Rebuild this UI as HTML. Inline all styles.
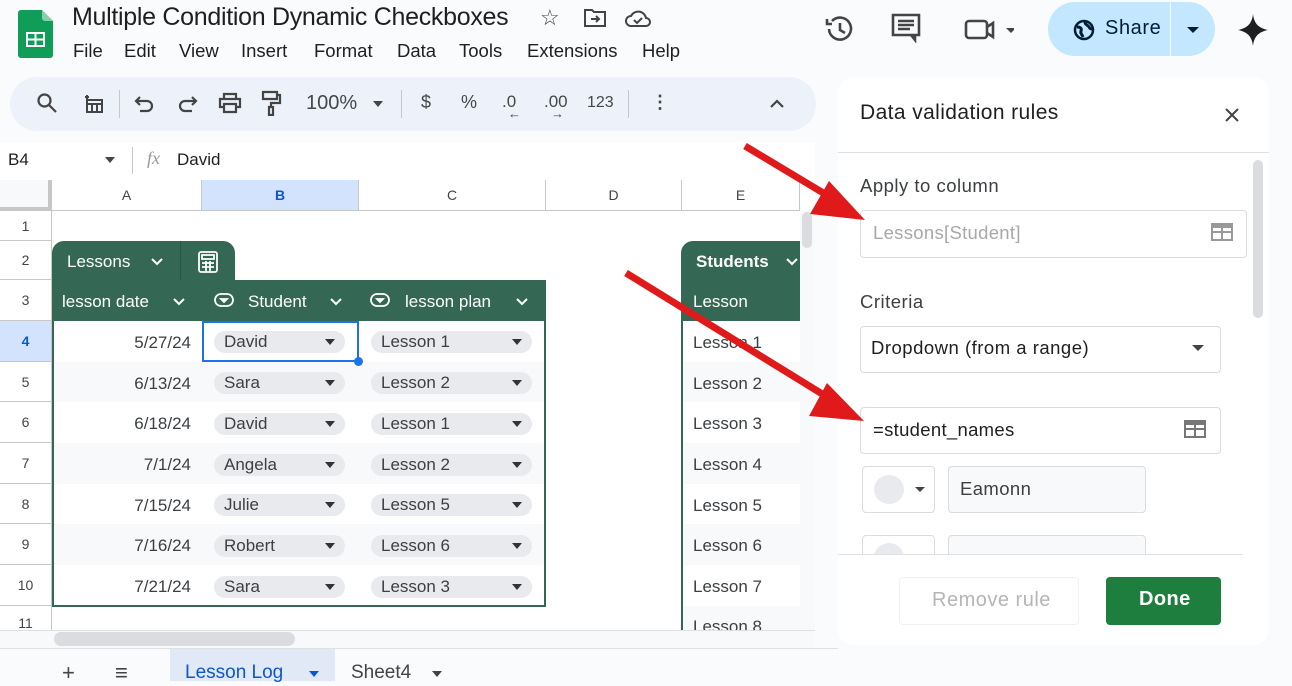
<!DOCTYPE html>
<html><head><meta charset="utf-8"><style>
*{margin:0;padding:0;box-sizing:border-box}
body{width:1292px;height:681px;overflow:hidden;background:#f9fbfd;font-family:"Liberation Sans",sans-serif;color:#1f1f1f;position:relative}
.a{position:absolute;white-space:nowrap}
.menu span{position:absolute;top:40px;font-size:18.5px;color:#1f1f1f}
.tb{position:absolute;top:92px;font-size:18px;color:#444746}
.colh{position:absolute;top:180px;height:31px;border-right:1px solid #c7c7c7;border-bottom:1px solid #c7c7c7;font-size:14px;color:#444;text-align:center;line-height:31px;background:#fff}
.rowh{position:absolute;left:0;width:52px;border-bottom:1px solid #c7c7c7;border-right:1px solid #c7c7c7;font-size:14px;color:#444;text-align:center;background:#fff}
.chip{position:absolute;height:22px;border-radius:11px;background:#e9eaee;font-size:17px;color:#3c4043;line-height:22px;padding-left:10px}
.chip:after{content:"";position:absolute;right:10px;top:8px;border-left:5px solid transparent;border-right:5px solid transparent;border-top:6px solid #333}
.date{position:absolute;left:52px;width:139px;text-align:right;font-size:17px;color:#3c4043}
.les{position:absolute;left:693px;font-size:17px;color:#3c4043}
.pin{position:absolute;border:1px solid #dadce0;border-radius:4px;background:#fff}
</style></head><body>
<svg class="a" style="left:18px;top:10px" width="35" height="48" viewBox="0 0 35 48"><path d="M3 0h21l11 11v34a3 3 0 0 1-3 3H3a3 3 0 0 1-3-3V3a3 3 0 0 1 3-3z" fill="#0f9d58"/><path d="M24 0l11 11H27a3 3 0 0 1-3-3z" fill="#87ceac"/><rect x="8" y="22" width="19" height="15" fill="#fff"/><rect x="10" y="24" width="6.5" height="4.5" fill="#0f9d58"/><rect x="18.5" y="24" width="6.5" height="4.5" fill="#0f9d58"/><rect x="10" y="30.5" width="6.5" height="4.5" fill="#0f9d58"/><rect x="18.5" y="30.5" width="6.5" height="4.5" fill="#0f9d58"/></svg>
<div class="a" style="left:72px;top:3px;font-size:25px;letter-spacing:-0.3px">Multiple Condition Dynamic Checkboxes</div>
<div class="a" style="left:540px;top:5px;font-size:22px;color:#444">☆</div>
<svg class="a" style="left:583px;top:8px" width="24" height="20" viewBox="0 0 24 20" fill="none" stroke="#444" stroke-width="2"><path d="M2 2h7l2 2h11v14H2z"/><path d="M8 11h8m-3-3l3 3-3 3"/></svg>
<svg class="a" style="left:624px;top:8px" width="28" height="20" viewBox="0 0 28 20" fill="none" stroke="#444" stroke-width="2"><path d="M7 18a5 5 0 0 1 0-10 8 8 0 0 1 15 2 4 4 0 0 1 0 8z"/><path d="M10 12l3 3 5-5"/></svg>
<div class="menu"><span style="left:73px">File</span><span style="left:124px">Edit</span><span style="left:179px">View</span><span style="left:241px">Insert</span><span style="left:314px">Format</span><span style="left:397px">Data</span><span style="left:459px">Tools</span><span style="left:527px">Extensions</span><span style="left:642px">Help</span></div>
<svg class="a" style="left:824px;top:14px" width="32" height="30" viewBox="0 0 32 30" fill="none" stroke="#444" stroke-width="2.6"><path d="M5 15a11 11 0 1 0 3-8"/><path d="M3 5v5h5"/><path d="M16 9v7l5 3"/></svg>
<svg class="a" style="left:891px;top:13px" width="30" height="30" viewBox="0 0 30 30" fill="none" stroke="#444" stroke-width="2.6"><path d="M2 2h26v20H8l-6 0z"/><path d="M7 8h16M7 12h16M7 16h12"/><path d="M24 22v5l-4-5" /></svg>
<svg class="a" style="left:964px;top:18px" width="50" height="24" viewBox="0 0 50 24" fill="none" stroke="#444" stroke-width="2.6"><rect x="2" y="3" width="21" height="17" rx="3"/><path d="M23 9l6-4v14l-6-4"/><path d="M42 10h10l-5 5z" fill="#444" stroke="none"/></svg>
<div class="a" style="left:1048px;top:2px;width:167px;height:54px;border-radius:27px;background:#c2e7ff"></div>
<div class="a" style="left:1170px;top:2px;width:1px;height:54px;background:#f9fbfd"></div>
<svg class="a" style="left:1072px;top:18px" width="24" height="24" viewBox="0 0 24 24"><circle cx="12" cy="12" r="9" fill="none" stroke="#001d35" stroke-width="2.5"/><path d="M5 9c3 0 5 1 4 4s1 3 2 6M13 4c0 3 3 3 4 5s2 2 3 2" stroke="#001d35" stroke-width="3" fill="none"/></svg>
<div class="a" style="left:1105px;top:17px;font-size:20px;color:#001d35;letter-spacing:.6px">Share</div>
<div class="a" style="left:1187px;top:27px;border-left:6px solid transparent;border-right:6px solid transparent;border-top:6px solid #001d35"></div>
<svg class="a" style="left:1238px;top:14px" width="30" height="32" viewBox="0 0 30 32"><path d="M15 0C16 9 20 14 30 16 20 18 16 23 15 32 14 23 10 18 0 16 10 14 14 9 15 0z" fill="#1f1f1f"/></svg>
<div class="a" style="left:10px;top:77px;width:806px;height:54px;border-radius:27px;background:#edf2fa"></div>
<svg class="a" style="left:36px;top:92px" width="22" height="22" viewBox="0 0 22 22" fill="none" stroke="#444" stroke-width="2.2"><circle cx="8.5" cy="8.5" r="6"/><path d="M13 13l7 7"/></svg>
<svg class="a" style="left:83px;top:92px" width="22" height="22" viewBox="0 0 22 22" fill="none" stroke="#444" stroke-width="2"><path d="M4 8h15v12H4zM4 12h15M9 12v8M14 12v8M4 3v4M2 5h4"/></svg>
<div class="a" style="left:119px;top:90px;width:1px;height:28px;background:#c7c7c7"></div>
<svg class="a" style="left:134px;top:93px" width="22" height="22" viewBox="0 0 22 22" fill="none" stroke="#444" stroke-width="2.2"><path d="M6 4L2 8l4 4"/><path d="M2 8h11a5 5 0 0 1 0 10H6"/></svg>
<svg class="a" style="left:176px;top:93px" width="22" height="22" viewBox="0 0 22 22" fill="none" stroke="#444" stroke-width="2.2"><path d="M16 4l4 4-4 4"/><path d="M20 8H9a5 5 0 0 0 0 10h7"/></svg>
<svg class="a" style="left:218px;top:92px" width="24" height="22" viewBox="0 0 24 22" fill="none" stroke="#444" stroke-width="2.2"><path d="M6 7V2h12v5M6 15H2V7h20v8h-4M6 12h12v8H6z"/></svg>
<svg class="a" style="left:260px;top:90px" width="22" height="26" viewBox="0 0 22 26" fill="none" stroke="#444" stroke-width="2.2"><path d="M3 2h14v7H3zM17 5h3v8h-9v4M9 17h4v8H9z"/></svg>
<div class="tb" style="left:306px;top:92px;font-size:20px">100%</div>
<div class="a" style="left:373px;top:101px;border-left:5px solid transparent;border-right:5px solid transparent;border-top:6px solid #444"></div>
<div class="a" style="left:401px;top:90px;width:1px;height:28px;background:#c7c7c7"></div>
<div class="tb" style="left:421px">$</div>
<div class="tb" style="left:461px">%</div>
<div class="tb" style="left:502px;font-size:17px">.0</div>
<div class="a" style="left:508px;top:106px;font-size:13px;color:#444">←</div>
<div class="tb" style="left:544px;font-size:17px">.00</div>
<div class="a" style="left:551px;top:106px;font-size:13px;color:#444">→</div>
<div class="tb" style="left:587px;font-size:16px;top:94px">123</div>
<div class="a" style="left:628px;top:90px;width:1px;height:28px;background:#c7c7c7"></div>
<div class="tb" style="left:651px;font-weight:bold">⋮</div>
<svg class="a" style="left:769px;top:98px" width="16" height="12" viewBox="0 0 16 12" fill="none" stroke="#444" stroke-width="2.2"><path d="M2 9l6-6 6 6"/></svg>
<div class="a" style="left:0;top:142px;width:815px;height:37px;background:#fff"></div>
<div class="a" style="left:8px;top:150px;font-size:17px">B4</div>
<div class="a" style="left:105px;top:157px;border-left:5px solid transparent;border-right:5px solid transparent;border-top:6px solid #444"></div>
<div class="a" style="left:132px;top:147px;width:1px;height:27px;background:#c7c7c7"></div>
<div class="a" style="left:147px;top:148px;font-size:18px;font-style:italic;color:#999;font-family:'Liberation Serif',serif">fx</div>
<div class="a" style="left:177px;top:150px;font-size:17px">David</div>
<div class="a" style="left:0;top:179px;width:815px;height:469px;background:#fff"></div>
<div class="colh" style="left:0;width:52px;background:#f8f9fa;border-right:4px solid #c7c7c7;border-bottom:4px solid #c7c7c7"></div>
<div class="colh" style="left:52px;width:150px">A</div>
<div class="colh" style="left:202px;width:157px;background:#d3e3fd;color:#0b57d0;font-weight:bold">B</div>
<div class="colh" style="left:359px;width:187px">C</div>
<div class="colh" style="left:546px;width:136px">D</div>
<div class="colh" style="left:682px;width:118px">E</div>
<div class="rowh" style="top:211px;height:30px;line-height:30px">1</div>
<div class="rowh" style="top:241px;height:39px;line-height:39px">2</div>
<div class="rowh" style="top:280px;height:41px;line-height:41px">3</div>
<div class="rowh" style="top:321px;height:41px;line-height:41px;background:#d3e3fd;color:#0b57d0;font-weight:bold">4</div>
<div class="rowh" style="top:362px;height:40px;line-height:40px">5</div>
<div class="rowh" style="top:402px;height:41px;line-height:41px">6</div>
<div class="rowh" style="top:443px;height:41px;line-height:41px">7</div>
<div class="rowh" style="top:484px;height:40px;line-height:40px">8</div>
<div class="rowh" style="top:524px;height:41px;line-height:41px">9</div>
<div class="rowh" style="top:565px;height:41px;line-height:41px">10</div>
<div class="rowh" style="top:606px;height:24px;line-height:34px;border-bottom:none">11</div>
<div class="a" style="left:52px;top:241px;width:183px;height:40px;background:#356854;border-radius:12px 12px 0 0"></div>
<div class="a" style="left:180px;top:241px;width:1px;height:40px;background:#2a5443"></div>
<div class="a" style="left:67px;top:252px;font-size:17px;color:#fff">Lessons</div>
<svg class="a" style="left:150px;top:257px" width="14" height="10" viewBox="0 0 14 10" fill="none" stroke="#fff" stroke-width="2"><path d="M2 2l5 5 5-5"/></svg>
<svg class="a" style="left:197px;top:250px" width="22" height="24" viewBox="0 0 22 24" fill="none" stroke="#fff" stroke-width="1.8"><rect x="2" y="2" width="18" height="20" rx="2"/><path d="M5 5h12v4H5zM5 13h12M5 17h12M9 11v10M13 11v10"/></svg>
<div class="a" style="left:52px;top:280px;width:494px;height:41px;background:#356854"></div>
<div class="a" style="left:62px;top:292px;font-size:17px;color:#fff">lesson date</div>
<svg class="a" style="left:172px;top:297px" width="14" height="10" viewBox="0 0 14 10" fill="none" stroke="#fff" stroke-width="2"><path d="M2 2l5 5 5-5"/></svg>
<svg class="a" style="left:214px;top:292px" width="20" height="16" viewBox="0 0 20 16" fill="none" stroke="#fff" stroke-width="1.8"><rect x="1" y="2" width="18" height="12" rx="6"/><path d="M7 7h6l-3 3z" fill="#fff"/></svg>
<div class="a" style="left:248px;top:292px;font-size:17px;color:#fff">Student</div>
<svg class="a" style="left:329px;top:297px" width="14" height="10" viewBox="0 0 14 10" fill="none" stroke="#fff" stroke-width="2"><path d="M2 2l5 5 5-5"/></svg>
<svg class="a" style="left:370px;top:292px" width="20" height="16" viewBox="0 0 20 16" fill="none" stroke="#fff" stroke-width="1.8"><rect x="1" y="2" width="18" height="12" rx="6"/><path d="M7 7h6l-3 3z" fill="#fff"/></svg>
<div class="a" style="left:405px;top:292px;font-size:17px;color:#fff">lesson plan</div>
<svg class="a" style="left:515px;top:297px" width="14" height="10" viewBox="0 0 14 10" fill="none" stroke="#fff" stroke-width="2"><path d="M2 2l5 5 5-5"/></svg>
<div class="a" style="left:52px;top:321px;width:494px;height:286px;border:2px solid #356854;border-top:none"></div>
<div class="a" style="left:54px;top:362px;width:490px;height:40px;background:#f8f9fa"></div>
<div class="a" style="left:54px;top:443px;width:490px;height:41px;background:#f8f9fa"></div>
<div class="a" style="left:54px;top:524px;width:490px;height:41px;background:#f8f9fa"></div>
<div class="date" style="top:333px">5/27/24</div>
<div class="date" style="top:374px">6/13/24</div>
<div class="date" style="top:414px">6/18/24</div>
<div class="date" style="top:455px">7/1/24</div>
<div class="date" style="top:496px">7/15/24</div>
<div class="date" style="top:536px">7/16/24</div>
<div class="date" style="top:577px">7/21/24</div>
<div class="chip" style="left:214px;top:331px;width:131px">David</div>
<div class="chip" style="left:214px;top:372px;width:131px">Sara</div>
<div class="chip" style="left:214px;top:413px;width:131px">David</div>
<div class="chip" style="left:214px;top:454px;width:131px">Angela</div>
<div class="chip" style="left:214px;top:494px;width:131px">Julie</div>
<div class="chip" style="left:214px;top:535px;width:131px">Robert</div>
<div class="chip" style="left:214px;top:576px;width:131px">Sara</div>
<div class="chip" style="left:371px;top:331px;width:161px">Lesson 1</div>
<div class="chip" style="left:371px;top:372px;width:161px">Lesson 2</div>
<div class="chip" style="left:371px;top:413px;width:161px">Lesson 1</div>
<div class="chip" style="left:371px;top:454px;width:161px">Lesson 2</div>
<div class="chip" style="left:371px;top:494px;width:161px">Lesson 5</div>
<div class="chip" style="left:371px;top:535px;width:161px">Lesson 6</div>
<div class="chip" style="left:371px;top:576px;width:161px">Lesson 3</div>
<div class="a" style="left:202px;top:321px;width:157px;height:41px;border:2px solid #1a73e8"></div>
<div class="a" style="left:354px;top:357px;width:9px;height:9px;border-radius:50%;background:#1a73e8"></div>
<div class="a" style="left:681px;top:241px;width:119px;height:40px;background:#356854;border-radius:12px 0 0 0"></div>
<div class="a" style="left:696px;top:252px;font-size:17px;color:#fff;font-weight:bold">Students</div>
<svg class="a" style="left:785px;top:257px" width="14" height="10" viewBox="0 0 14 10" fill="none" stroke="#fff" stroke-width="2"><path d="M2 2l5 5 5-5"/></svg>
<div class="a" style="left:681px;top:280px;width:119px;height:41px;background:#356854"></div>
<div class="a" style="left:693px;top:292px;font-size:17px;color:#fff">Lesson</div>
<div class="a" style="left:681px;top:321px;width:2px;height:309px;background:#356854"></div>
<div class="a" style="left:683px;top:362px;width:117px;height:40px;background:#f8f9fa"></div>
<div class="a" style="left:683px;top:443px;width:117px;height:41px;background:#f8f9fa"></div>
<div class="a" style="left:683px;top:524px;width:117px;height:41px;background:#f8f9fa"></div>
<div class="a" style="left:683px;top:606px;width:117px;height:24px;background:#f8f9fa"></div>
<div class="les" style="top:333px">Lesson 1</div>
<div class="les" style="top:374px">Lesson 2</div>
<div class="les" style="top:414px">Lesson 3</div>
<div class="les" style="top:455px">Lesson 4</div>
<div class="les" style="top:496px">Lesson 5</div>
<div class="les" style="top:536px">Lesson 6</div>
<div class="les" style="top:577px">Lesson 7</div>
<div class="les" style="top:617px;height:13px;overflow:hidden">Lesson 8</div>
<div class="a" style="left:800px;top:211px;width:15px;height:419px;background:#f8f9fa"></div>
<div class="a" style="left:802px;top:212px;width:10px;height:36px;border-radius:5px;background:#dadce0"></div>
<div class="a" style="left:0;top:630px;width:815px;height:18px;background:#f8f9fa;border-top:1px solid #e0e0e0"></div>
<div class="a" style="left:54px;top:632px;width:241px;height:14px;border-radius:7px;background:#dadce0"></div>
<div class="a" style="left:0;top:648px;width:838px;height:33px;background:#f9fbfd;border-top:1px solid #e0e0e0"></div>
<div class="a" style="left:62px;top:660px;font-size:22px;color:#444">+</div>
<div class="a" style="left:115px;top:660px;font-size:22px;color:#444">≡</div>
<div class="a" style="left:170px;top:649px;width:165px;height:32px;background:#e1e9f7"></div>
<div class="a" style="left:185px;top:662px;font-size:19px;color:#0b57d0">Lesson Log</div>
<div class="a" style="left:309px;top:671px;border-left:5px solid transparent;border-right:5px solid transparent;border-top:6px solid #0b57d0"></div>
<div class="a" style="left:351px;top:662px;font-size:19px;color:#444">Sheet4</div>
<div class="a" style="left:432px;top:671px;border-left:5px solid transparent;border-right:5px solid transparent;border-top:6px solid #444"></div>
<div class="a" style="left:838px;top:77px;width:431px;height:568px;background:#fff;border-radius:16px"></div>
<div class="a" style="left:860px;top:101px;font-size:21px;color:#1f1f1f;letter-spacing:.4px">Data validation rules</div>
<svg class="a" style="left:1224px;top:107px" width="16" height="16" viewBox="0 0 16 16" stroke="#444" stroke-width="2"><path d="M2 2l12 12M14 2L2 14"/></svg>
<div class="a" style="left:838px;top:152px;width:431px;height:1px;background:#e0e0e0"></div>
<div class="a" style="left:1253px;top:160px;width:10px;height:158px;border-radius:5px;background:#dadce0"></div>
<div class="a" style="left:860px;top:175px;font-size:18.5px;color:#3c4043;letter-spacing:.5px">Apply to column</div>
<div class="pin" style="left:860px;top:210px;width:387px;height:48px"></div>
<div class="a" style="left:873px;top:222px;font-size:18.5px;color:#a8a8a8;letter-spacing:.3px">Lessons[Student]</div>
<svg class="a" style="left:1211px;top:223px" width="22" height="18" viewBox="0 0 22 18"><rect x="1" y="1" width="20" height="16" fill="none" stroke="#999" stroke-width="2"/><path d="M1 9h20M11 1v16" stroke="#999" stroke-width="2"/><rect x="1" y="1" width="20" height="4" fill="#999"/></svg>
<div class="a" style="left:860px;top:291px;font-size:18.5px;color:#3c4043;letter-spacing:.5px">Criteria</div>
<div class="pin" style="left:860px;top:326px;width:361px;height:47px"></div>
<div class="a" style="left:871px;top:337px;font-size:18.5px;color:#1f1f1f;letter-spacing:.5px">Dropdown (from a range)</div>
<div class="a" style="left:1192px;top:345px;border-left:6px solid transparent;border-right:6px solid transparent;border-top:6px solid #444"></div>
<div class="pin" style="left:860px;top:407px;width:361px;height:47px"></div>
<div class="a" style="left:873px;top:419px;font-size:18.5px;color:#1f1f1f;letter-spacing:.3px">=student_names</div>
<svg class="a" style="left:1184px;top:420px" width="22" height="18" viewBox="0 0 22 18"><rect x="1" y="1" width="20" height="16" fill="none" stroke="#777" stroke-width="2"/><path d="M1 9h20M11 1v16" stroke="#777" stroke-width="2"/><rect x="1" y="1" width="20" height="4" fill="#777"/></svg>
<div class="pin" style="left:862px;top:466px;width:73px;height:47px"></div>
<div class="a" style="left:874px;top:475px;width:30px;height:29px;border-radius:50%;background:#e8eaed"></div>
<div class="a" style="left:915px;top:487px;border-left:5px solid transparent;border-right:5px solid transparent;border-top:5px solid #444"></div>
<div class="pin" style="left:948px;top:466px;width:198px;height:47px;background:#f8f9fa"></div>
<div class="a" style="left:960px;top:478px;font-size:18.5px;color:#3c4043;letter-spacing:.4px">Eamonn</div>
<div class="a" style="left:862px;top:535px;width:73px;height:20px;overflow:hidden"><div class="pin" style="left:0;top:0;width:73px;height:47px"></div><div class="a" style="left:12px;top:8px;width:30px;height:29px;border-radius:50%;background:#e8eaed"></div></div>
<div class="a" style="left:948px;top:535px;width:198px;height:20px;overflow:hidden"><div class="pin" style="left:0;top:0;width:198px;height:47px;background:#f8f9fa"></div></div>
<div class="a" style="left:838px;top:554px;width:405px;height:1px;background:#e0e0e0"></div>
<div class="a" style="left:899px;top:577px;width:180px;height:48px;border:1px solid #f1f1f1;border-radius:4px"></div>
<div class="a" style="left:932px;top:589px;font-size:20px;color:#b5b5b5;letter-spacing:.5px">Remove rule</div>
<div class="a" style="left:1106px;top:577px;width:115px;height:48px;border-radius:4px;background:#1e7e3e"></div>
<div class="a" style="left:1139px;top:588px;font-size:20px;color:#fff;font-weight:bold;letter-spacing:.4px">Done</div>
<svg class="a" style="left:0;top:0" width="1292" height="681" viewBox="0 0 1292 681"><g stroke="#e01a1a" stroke-width="7" fill="#e01a1a"><line x1="745" y1="146" x2="835" y2="200"/><line x1="626" y1="273" x2="832" y2="400"/></g><polygon points="865,220 829,181 810,214" fill="#e01a1a"/><polygon points="864,421 827,383 809,416" fill="#e01a1a"/></svg>
</body></html>
